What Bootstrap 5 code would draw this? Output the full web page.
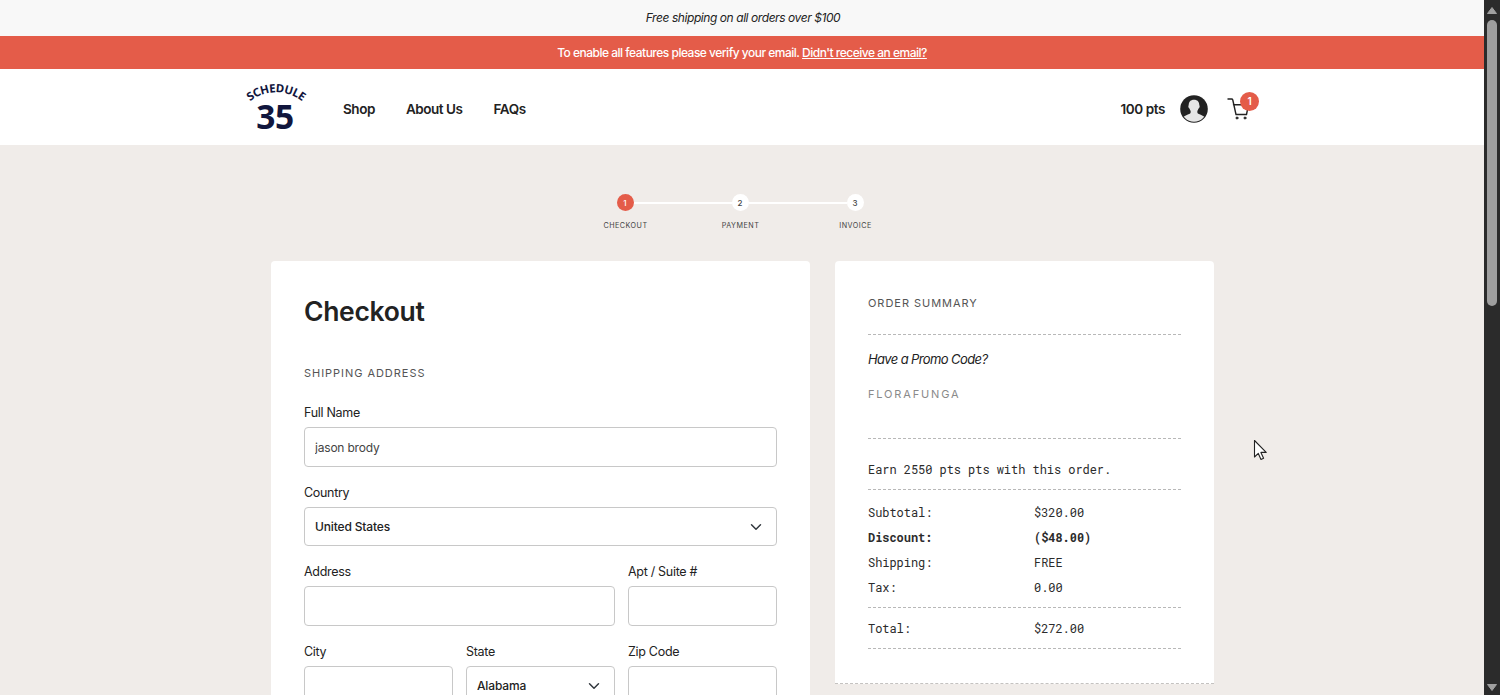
<!DOCTYPE html>
<html lang="en">
<head>
<meta charset="utf-8">
<meta name="viewport" content="width=device-width, initial-scale=1">
<title>Checkout</title>
<link href="https://cdn.jsdelivr.net/npm/bootstrap@5.3.0/dist/css/bootstrap.min.css" rel="stylesheet">
<style>
  html, body { height: 100%; }
  body { font-family: Inter, "Liberation Sans", sans-serif; font-size: 13px; line-height: 20px; color: #222; background: #f0ece9; overflow: hidden; letter-spacing: -.1px; }
  .viewport { height: 695px; }
  .page { width: 1484px; overflow: hidden; }
  .promo-bar { height: 36px; background: #f8f8f8; font-size: 12px; letter-spacing: -.43px; padding: 0 0 1px 2px; }
  .verify-bar { height: 33px; background: #e45c49; color: #fff; font-size: 12px; font-weight: 500; letter-spacing: -.5px; }
  .verify-bar a { color: #fff; }
  .site-nav { height: 76px; background: #fff; padding: 0 225px 0 244px; font-size: 13.5px; font-weight: 600; letter-spacing: -.45px; }
  .site-nav a { color: #222; text-decoration: none; }
  .brand-mark { overflow: visible; }
  .menu { gap: 31px; margin-left: 35px; padding-top: 4px; }
  .account { padding-top: 3px; }
  .pts { margin-right: 15px; padding-top: 1px; letter-spacing: -.4px; }
  .cart { width: 31px; height: 28px; margin-left: 20px; }
  .cart svg { margin-left: -1px; display: block; margin-top: 2px; }
  .cart-count { top: -3px; right: 0; width: 19px; height: 19px; background: #e45c49; color: #fff; font-size: 10px; border-radius: 50%; letter-spacing: 0; }
  .steps { height: 116px; padding-top: 49px; margin-left: -4px; }
  .step { width: 115px; position: relative; font-size: 7.2px; line-height: 10px; letter-spacing: .5px; color: #444; }
  .step-name { padding-left: 1px; }
  .step + .step::before { content: ""; position: absolute; height: 2px; background: #fff; left: -49px; width: 98px; top: 8px; }
  .dot { width: 17px; height: 17px; background: #fff; border-radius: 50%; font-size: 8px; font-weight: 500; letter-spacing: 0; margin-bottom: 9.5px; }
  .dot.current { background: #e45c49; color: #fff; }
  .columns { padding-left: 271px; gap: 25px; }
  .panel { background: #fff; border-radius: 4px 4px 0 0; padding: 33px; }
  .panel-form { width: 539px; height: 560px; }
  .panel-sum { width: 379px; height: 423px; padding-top: 32px; border-bottom: 1px dashed #c4c2c0; }
  h1 { font-size: 26.5px; line-height: 34px; font-weight: 600; letter-spacing: -.33px; margin: 0 0 35px; }
  .section-title { font-size: 11px; line-height: 20px; letter-spacing: .96px; font-weight: 400; color: #555; margin: 0; }
  .section-title.rule { height: 42px; margin-bottom: 14px; }
  .form-label { font-size: 12.5px; line-height: 19px; margin: 0 0 5px; letter-spacing: -.3px; display: block; }
  .form-control, .form-select { height: 39.5px; border: 1px solid #c8c8c8; border-radius: 4px; font-size: 12px; padding: 0 10px; color: #444; letter-spacing: -.2px; }
  .form-select { color: #222; font-weight: 500; letter-spacing: -.15px; background-size: 12px; background-position: right 14px center; }
  .fields { display: grid; grid-template-columns: repeat(3, 149px); column-gap: 13px; row-gap: 16px; margin-top: 20.4px; }
  .w3 { grid-column: span 3; } .w2 { grid-column: span 2; }
  .rule { border-bottom: 1px dashed #b8b8b8; }
  .promo-q { letter-spacing: -.6px; }
  .promo-code { font-size: 11px; letter-spacing: 1.85px; color: #8a8a8a; height: 70px; padding-top: 15px; border-bottom: 1px dashed #b8b8b8; }
  .receipt { font-family: "Roboto Mono", "Liberation Mono", monospace; font-size: 12px; letter-spacing: -.05px; line-height: 20px; color: #2b2b2b; }
  .earn { height: 51px; padding-top: 20px; }
  .sums { height: 118px; padding-top: 9px; }
  .line { display: grid; grid-template-columns: 166px 1fr; height: 25px; align-items: center; }
  .total { height: 41px; }
  .scroll { width: 16px; background: #2b2b2b; padding: 7px 3px 3px; }
  .thumb { width: 10px; height: 286px; border-radius: 5px; background: #9f9f9f; margin: 6px 0 auto; }
  .pointer { left: 1253px; top: 439px; }
</style>
</head>
<body>
<div class="viewport d-flex position-relative">
  <div class="page">
    <div class="promo-bar d-flex justify-content-center align-items-center fst-italic">Free shipping on all orders over $100</div>
    <div class="verify-bar d-flex justify-content-center align-items-center"><span>To enable all features please verify your email. <a href="#">Didn't receive an email?</a></span></div>
    <header class="site-nav d-flex align-items-center">
      <svg class="brand-mark" width="64" height="56" viewBox="0 0 64 56" fill="#11163d" font-family="Noto Sans, sans-serif" font-weight="700">
        <path id="arc" d="M-1.700 30.200 A42 42 0 0 1 65.700 30.200" fill="none"/>
        <text font-size="11.500" letter-spacing="-.4" text-anchor="middle"><textPath href="#arc" startOffset="50%">SCHEDULE</textPath></text>
        <text x="31" y="49.500" font-size="33.500" text-anchor="middle" letter-spacing="-.5">35</text>
      </svg>
      <nav class="menu d-flex">
        <a href="#">Shop</a><a href="#">About Us</a><a href="#">FAQs</a>
      </nav>
      <div class="account d-flex align-items-center ms-auto">
        <span class="pts">100 pts</span>
        <svg width="28" height="28" viewBox="0 0 28 28">
          <defs><clipPath id="face"><circle cx="14" cy="14" r="12.800"/></clipPath></defs>
          <circle cx="14" cy="14" r="13.800" fill="#222"/>
          <path clip-path="url(#face)" fill="#e6e6e6" d="M14 4.800c3.500 0 5.300 2.200 5.300 5.300 0 .5.500.8.300 1.800-.2.900-.8 1.200-1 1.700-.3 1-1 1.700-1.200 2.300-.2 1.200 0 2.400.9 2.900 2.200 1.200 5.700 1.800 7.200 4.300V28H2.500v-4.900c1.500-2.500 5-3.100 7.200-4.300.9-.5 1.100-1.700.9-2.900-.2-.6-.9-1.300-1.200-2.300-.2-.5-.8-.8-1-1.700-.2-1 .3-1.300.3-1.800 0-3.100 1.800-5.300 5.300-5.300z"/>
        </svg>
        <a href="#" class="cart position-relative">
          <svg width="24" height="26" viewBox="0 0 24 26" fill="none" stroke="#222" stroke-width="1.400" stroke-linecap="round" stroke-linejoin="round">
            <path d="M1 2h3.600c.7 0 1 .4 1.200 1L9 17.500h10.500L21.500 7.700M6.500 7.700H21.500"/>
            <circle cx="10" cy="21" r="1.100" fill="#222" stroke-width=".7"/><circle cx="18" cy="21" r="1.100" fill="#222" stroke-width=".7"/>
          </svg>
          <span class="cart-count position-absolute d-flex justify-content-center align-items-center">1</span>
        </a>
      </div>
    </header>

    <div class="steps d-flex justify-content-center">
      <div class="step d-flex flex-column align-items-center"><span class="dot current d-flex justify-content-center align-items-center">1</span><span class="step-name">CHECKOUT</span></div>
      <div class="step d-flex flex-column align-items-center"><span class="dot d-flex justify-content-center align-items-center">2</span><span class="step-name">PAYMENT</span></div>
      <div class="step d-flex flex-column align-items-center"><span class="dot d-flex justify-content-center align-items-center">3</span><span class="step-name">INVOICE</span></div>
    </div>

    <main class="columns d-flex align-items-start">
      <section class="panel panel-form">
        <h1>Checkout</h1>
        <h2 class="section-title">SHIPPING ADDRESS</h2>
        <form class="fields">
          <div class="w3"><label class="form-label" for="name">Full Name</label><input id="name" class="form-control" value="jason brody"></div>
          <div class="w3"><label class="form-label" for="country">Country</label><select id="country" class="form-select"><option>United States</option></select></div>
          <div class="w2"><label class="form-label" for="address">Address</label><input id="address" class="form-control"></div>
          <div><label class="form-label" for="apt">Apt / Suite #</label><input id="apt" class="form-control"></div>
          <div><label class="form-label" for="city">City</label><input id="city" class="form-control"></div>
          <div><label class="form-label" for="state">State</label><select id="state" class="form-select"><option>Alabama</option></select></div>
          <div><label class="form-label" for="zip">Zip Code</label><input id="zip" class="form-control"></div>
        </form>
      </section>

      <aside class="panel panel-sum">
        <h2 class="section-title rule">ORDER SUMMARY</h2>
        <div class="fst-italic promo-q">Have a Promo Code?</div>
        <div class="promo-code">FLORAFUNGA</div>
        <div class="receipt">
          <div class="rule earn">Earn 2550 pts pts with this order.</div>
          <div class="rule sums">
            <div class="line"><span>Subtotal:</span><span>$320.00</span></div>
            <div class="line fw-bold"><span>Discount:</span><span>($48.00)</span></div>
            <div class="line"><span>Shipping:</span><span>FREE</span></div>
            <div class="line"><span>Tax:</span><span>0.00</span></div>
          </div>
          <div class="rule total line"><span>Total:</span><span>$272.00</span></div>
        </div>
      </aside>
    </main>
  </div>
  <div class="scroll d-flex flex-column align-items-center">
    <svg width="10" height="7" viewBox="0 0 10 7"><path d="M5 .5 9.500 6.500H.5z" fill="#9f9f9f" stroke="#9f9f9f" stroke-linejoin="round"/></svg>
    <div class="thumb"></div>
    <svg width="10" height="9" viewBox="0 0 10 9"><path d="M5 7.500.5 1.500h9z" fill="#9f9f9f" stroke="#9f9f9f" stroke-linejoin="round"/></svg>
  </div>
  <svg class="pointer position-absolute" width="15" height="23" viewBox="0 0 15 23"><path d="M1.500 1.500v16.500l3.800-3.600 2.700 6 2.600-1.200-2.700-5.800h5.300z" fill="#fff" stroke="#222" stroke-width="1.100" stroke-linejoin="round"/></svg>
</div>
<script src="https://cdn.jsdelivr.net/npm/bootstrap@5.3.0/dist/js/bootstrap.bundle.min.js"></script>
</body>
</html>
